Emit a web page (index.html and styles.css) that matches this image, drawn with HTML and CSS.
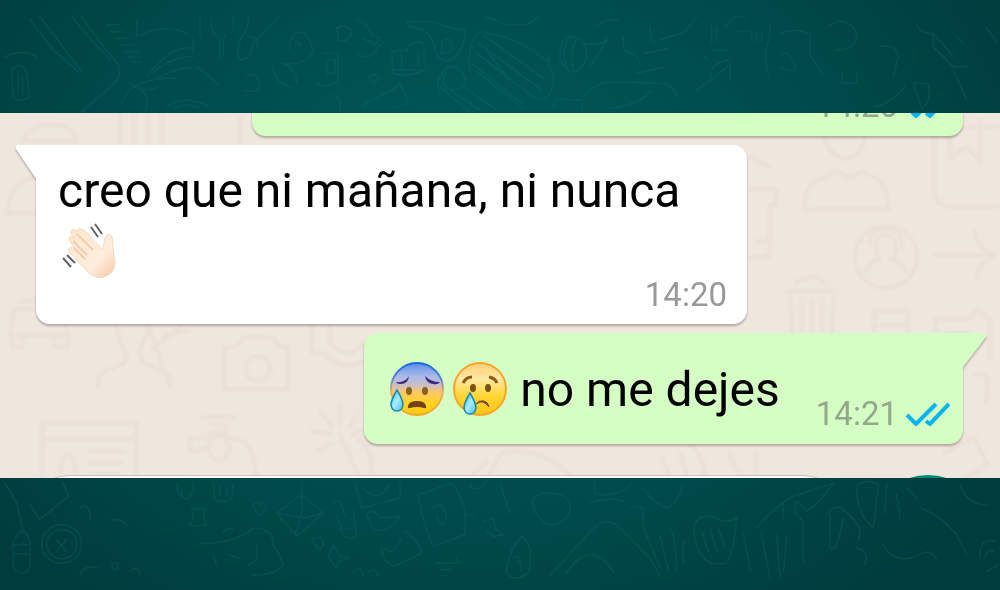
FILE: index.html
```html
<!DOCTYPE html>
<html lang="es">
<head>
<meta charset="utf-8">
<meta name="viewport" content="width=device-width, initial-scale=1">
<title>Chat</title>
<link rel="stylesheet" href="styles.css">
</head>
<body class="page">
<header class="band band-top">
  <svg class="band-doodles" viewBox="0 0 3000 339" preserveAspectRatio="xMidYMid slice" aria-hidden="true">
    <path d="M15 170q50-25 95 0M35 210q25-30 45 5l10 75q-30 20-50 5zM55 220v55M68 230v50M90 60l70 90 75 65M120 50l60 80 65 85M215 50l60 70 55 60M240 45l70 95 45 55q15 40-30 70l-90 80"/>
    <path d="M320 75h35M330 95h35M345 115h40M360 135h40M375 155h40M385 172h35M395 186h30M410 60v50M425 105q70-35 135-5M440 230q80-100 140-85M460 220q50-50 120-50M475 232q60-30 100-30M400 260q60-30 130-25M365 310q30-70 60-40t10 60M385 245q45 40 90 15M580 110v50"/>
    <path d="M600 50v60M635 55q-5 50 25 60v65M675 105q-10 30-5 60M700 50v40M745 50q0 40-20 60-20 50-5 70 35 0 40-50 60-60 75-80M740 110q40-5 30 35M590 200l70 55M740 230q30-20 35 15 10 40-40 25M500 320q50-35 120-5M525 325q40-20 70 0"/>
    <path d="M870 150q-10-40 30-55 30 10 40 60-20 40-80 35M885 120l20 20M820 200q0 50 65 65M850 190q40 20 40 60M970 160h45v80q-30 30-70 10M980 180h25v40h-25zM1010 85q30-20 45 10-5 35-40 25zM1065 60q40 5 50 45l25 10-15 20-35-20M1070 155q25 30 50 5l20-25M1110 235a12 12 0 1024 0 12 12 0 10-24 0"/>
    <path d="M1220 65h80q40 20 95 25 0 60-40 90-40 10-50-30-5-60-75-70zM1325 125q20-20 30 5t-30 30zM1175 160q30-20 45-5 5-30 40-30 20 10 10 40l10 40q-50 30-100 15zM1180 210h95M1205 200v-45M1255 200v-45M1320 285q-20-50 25-85 50 0 50 50-30 30-55 15-20-25 0-50M1090 315q60-35 90-45l20-20 25 60-45 15M1000 285q25 10 20 45"/>
    <path d="M1410 210q-10-90 30-115 130 20 200 90l5-20q10 0 0 30 30 40 5 85-15 25-40 15l-85-60-70-90M1450 105l180 130M1435 130l190 140M1425 155l180 140M1415 190l150 120M1430 215l140 110M1320 260l90 80M1350 270l90 60M1390 260l100 70M1460 50l60 25h60l35-25"/>
    <path d="M1680 180q0-70 30-70 50 0 50 60-20 60-55 40zM1700 205q-20-60 10-95M1720 205q-10-60 10-85M1750 130q50 10 75-15l-55 85M1790 75q35-20 70-15M1870 110q-5 40 20 50 30 10 30 35M1935 160l70-15M1980 120q50-20 70-20l40-50M1950 80q0 40 15 50M1660 325q0-40 35-25h50v40M1750 290q30-40 80-45l150 5q40 0 50 40M1910 220l85-20M1820 325q90-5 130-50"/>
    <path d="M2135 80v50M2150 80v45M2140 150h40M2110 165l15 15M2175 85q25-50 60-30M2205 95h35M2255 95v30M2270 95v30M2285 95v30M2310 70q0 50-10 70t5 85M2340 100q60-20 90 5v60l40 60M2340 170q20-30 40 15t-40 15M2090 270q60-40 100-80v50M2190 180q-60 5-60 60"/>
    <path d="M2490 75q50-30 80 25 0 50-60 50M2525 215v35h45v-35M2640 140q50-10 55 30l-15 60M2750 75q15 30 50 25v40l60 60h45M2800 100l60 70M2740 250h45q10 60-20 75l-15-45zM2625 320q40-5 90-60M2860 210l40 90M2960 85l30 40M2870 110l20 20"/>
  </svg>
</header>

<main class="chat">
  <svg class="wallpaper" viewBox="0 0 1000 365" preserveAspectRatio="xMidYMid slice" aria-hidden="true">
    <path d="M22 28q8-16 30-16t24 16zM120 0v32M134 0v32M148 0v32M162 0v32M240 5v28M8 96q2-26 26-32M6 100h30"/>
    <path d="M14 196h48l6 26H10zM12 222v12h10v-10M68 222v12H54v-10M22 188h34M98 274q-2-14 12-18l14-6q6-8-4-20l-4-22M146 204q6 10-2 24-8 12 0 22l14 6q14 4 12 18zM152 236l28-22M164 222l24-4"/>
    <path d="M224 234h12l8-10h28l8 10h8v42h-64zM258 243a12 12 0 100 25 12 12 0 000-25M312 210v30h12M324 240q20 22 44 6M330 214v16q18 20 34 0"/>
    <path d="M42 370v-60h94v60M42 326h94M90 338h32M90 350h32M90 362h32M60 370q0-28 8-28t8 28M202 304h34M212 312h14v10M188 325h18q4-6 12-6t12 6q26 0 26 42M190 325v14l16-4M210 330a10 12 0 1018 0 10 12 0 00-18 0"/>
    <path d="M340 290v22M320 298l12 16M360 296l-10 18M312 318l18 4M366 314l-14 8M318 338l14-8M340 322l18 40M358 326q18 12 12 38"/>
    <path d="M824 8q-2 34 22 38 22-4 20-38M836 22h18M804 96q0-26 20-32l14-6q12 12 24 0l12 6q14 6 14 32zM934 0v78q2 16 18 16h60M950 8v38l16-12 14 14V8M938 14h64"/>
    <path d="M886 113a31 31 0 100 62 31 31 0 000-62M866 158q4-10 14-12-4-4-4-12 0-12 10-12t10 12q0 8-4 12 10 2 14 12M870 132q-2-14 16-16 18 2 16 18M934 142h62M974 118q4 20 22 24-16 6-20 24M750 44l20 10M750 76h26v16h-6v52h-20M756 128h10"/>
    <path d="M786 178h50M796 170q14-12 30 0M790 184l4 60M802 186v60M812 186v60M822 186v60M834 184l-4 60M874 198h34v60M874 198v60M874 212h34M936 206h34l8-10 12 10v40M936 206v60M948 220h22"/>
    <path d="M484 370l18-30q40-8 70 24M662 344l8 20M680 340l6 20M690 330q20 20 12 40M730 340q6 26 24 30M756 338v30M944 340l30-16 14 28-30 18M974 262q18-8 12 28M486 350q-20 14-22 30"/>
  </svg>

  <section class="messages" aria-label="Mensajes">
    <article class="bubble bubble-out bubble-first">
      <div class="meta">
        <time>14:20</time>
        <svg class="ticks" viewBox="0 0 44 24" role="img" aria-label="Leído"><path d="M1 13l9 9L30 2M20 19l4 3L43 2"/></svg>
      </div>
    </article>

    <article class="bubble bubble-in">
      <svg class="tail tail-in" viewBox="0 0 22 35" aria-hidden="true"><path d="M22 0H3Q0 0 1 4L22 35z"/></svg>
      <p class="text">creo que ni mañana, ni nunca
        <svg class="emoji emoji-wave" viewBox="0 0 56 56" role="img" aria-label="Mano saludando">
          <defs><linearGradient id="skin" x1="0" y1="0" x2="1" y2="1"><stop offset="0" stop-color="#fbe5ce"/><stop offset=".65" stop-color="#ffeddb"/><stop offset="1" stop-color="#f5c5a8"/></linearGradient></defs>
          <path fill="url(#skin)" stroke="#f5d9bf" d="M10 21c-3-3-4-6-2-7 1-1 3 0 5 2-4-4-5-7-3-9 2-1 4 0 6 2-1-3 1-4 3-3 2 0 4 2 6 4 7 7 12 13 15 16 3-3 1-9 4-13 1-3 5-2 6 1 1 7 1 13 2 19 3 10-1 17-8 20-8 4-14 0-20-6L9 31c-3-3-3-5-1-6 2-2 4 0 5 1z"/>
          <path class="wave-crease" d="M11 18l14 14M15 11l16 16M12 25l11 11"/>
          <path class="wave-motion" d="M29 4l7 10M33 1l7 10M1 35l8 9M5 32l8 8"/>
        </svg>
      </p>
      <div class="meta meta-in"><time>14:20</time></div>
    </article>

    <article class="bubble bubble-out">
      <svg class="tail tail-out" viewBox="0 0 25 37" aria-hidden="true"><path d="M0 0h21q4 0 3 4L1 34v3H0z"/></svg>
      <p class="text">
        <svg class="emoji emoji-gap" viewBox="0 0 56 56" role="img" aria-label="Cara con sudor frío">
          <defs>
            <linearGradient id="cold" x1="0" y1="0" x2="0" y2="1"><stop offset="0" stop-color="#5b8ee8"/><stop offset=".25" stop-color="#a8b9ea"/><stop offset=".42" stop-color="#c9bdc9"/><stop offset=".58" stop-color="#ffc95e"/><stop offset=".8" stop-color="#ffd51c"/><stop offset="1" stop-color="#ffc815"/></linearGradient>
            <linearGradient id="coldrim" x1="0" y1="0" x2="0" y2="1"><stop offset="0" stop-color="#1268e0"/><stop offset=".3" stop-color="#5786d6"/><stop offset=".55" stop-color="#f2a95c"/><stop offset="1" stop-color="#f5a51f"/></linearGradient>
            <linearGradient id="drop" x1="0" y1="0" x2="1" y2="1"><stop offset="0" stop-color="#35b5dc"/><stop offset=".5" stop-color="#a9ecff"/><stop offset="1" stop-color="#45bfe5"/></linearGradient>
          </defs>
          <circle cx="28" cy="28" r="26" fill="url(#cold)" stroke="url(#coldrim)" stroke-width="2"/>
          <path fill="#3c2c7c" d="M7 21q9 1 13-6-1 8-8 8-4 0-5-2zM36 15q6 6 15 6-2 3-7 2-7-1-8-8z"/>
          <ellipse cx="20" cy="30" rx="3" ry="4" fill="#87601c"/><ellipse cx="36" cy="30" rx="3" ry="4" fill="#87601c"/>
          <path fill="#754316" d="M19 45q-1 3 2 2 7-2 14 0 3 1 2-2-1-5-9-5t-9 5z"/>
          <path fill="url(#drop)" stroke="#118ab8" stroke-width="1.5" d="M8 29q-6 10-6 15 1 6 6 6t6-6q0-5-6-15z"/>
        </svg><svg class="emoji" viewBox="0 0 56 56" role="img" aria-label="Cara llorando">
          <defs><linearGradient id="sad" x1="0" y1="0" x2="0" y2="1"><stop offset="0" stop-color="#ffce70"/><stop offset=".3" stop-color="#ffe9a5"/><stop offset=".65" stop-color="#ffd52f"/><stop offset="1" stop-color="#ffc414"/></linearGradient></defs>
          <circle cx="28" cy="28" r="26" fill="url(#sad)" stroke="#f9a52a" stroke-width="2"/>
          <path class="brow" d="M11 22q3-6 9-6M37 16q6 1 8 6"/>
          <ellipse cx="21" cy="27" rx="3" ry="4" fill="#795017"/><ellipse cx="36" cy="27" rx="3" ry="4" fill="#795017"/>
          <path fill="#774416" d="M24 43q4-3 7-2 3 1 6 5-1-5-5-6-5-1-8 3z" stroke="#774416"/>
          <path fill="url(#drop)" stroke="#118ab8" stroke-width="1.5" d="M18 32q-6 10-6 15 1 6 6 6t6-6q0-5-6-15z"/>
        </svg> no me dejes</p>
      <div class="meta">
        <time>14:21</time>
        <svg class="ticks" viewBox="0 0 44 24" role="img" aria-label="Leído"><path d="M1 13l9 9L30 2M20 19l4 3L43 2"/></svg>
      </div>
    </article>
  </section>

  <form class="composer">
    <input class="composer-input" type="text" aria-label="Mensaje">
    <button class="composer-send" type="button" aria-label="Mensaje de voz"></button>
  </form>
</main>

<footer class="band band-bottom">
  <svg class="band-doodles" viewBox="0 0 3000 336" preserveAspectRatio="xMidYMid slice" aria-hidden="true">
    <path d="M15 15l35 60 20 90M90 80l30 45 85-70q-10-30-20-45M60 160h15l15 30v80q-25 30-50 0v-80zM40 200h50M40 228h50M185 140a60 58 0 100 116 60 58 0 000-116M185 155a45 44 0 100 88 45 44 0 000-88M170 185l30 35M200 185l-30 35M240 90q30-20 30 35M335 125q30-5 45 20M240 290q10-30 55-20M335 260q20-15 20 10-15 20-20-10M390 280q25-20 30 10"/>
    <path d="M530 15q0 35 30 50 25-20 20-50M545 30v25M640 15l5 50q20 10 50 0l5-50M660 25v30M680 25v30M575 90l20 5 20-5-5 25 10 25-30 5-20-5 10-20zM760 80q15-15 20 0 10-10 18 5-5 20-20 28-15-10-18-33M600 195q100 5 160-45 60 0 60 50 20 30 30 60-30 35-90 30M670 165q10-20 30-10M690 230l25 10M640 230l10 35M770 200v45l-25 15"/>
    <path d="M830 105l75-55 65 55-80 70zM905 15v90l-20 65M830 105l80 15 60-15M1000 80q15-25 25 0l10 35M1010 110l20 65q25 10 40 0l-10-80M1020 155l40-5M1065 15l20 75 115-30V15M1090 30q50 50 80-15M1100 110q20-25 40 10l60-5q-30 50-80 40zM935 185q35-20 35 15-10 30-35-15M985 235l15-35 20 35 30 5-35 10-5 20-15-20zM1145 210q0 40 40 55l80-40q-10-40-50-65M1155 210q20 30 50-30M1060 285q20-30 30 10M1105 285q20-25 30 10"/>
    <path d="M1255 50l100-35q30 40 40 80v75l-95 35q-30-60-45-155zM1300 90q30-25 40 30-15 40-30-5M1410 20q20 30 50-10M1390 110h30M1450 130l30-10 5 30 25 20-30 5-20-15M1310 255h70M1320 275h30M1370 240v15M1500 15q20 60 30 90M1600 60q40-30 90-5 35 15 10 65-50 40-80 0-25-20-20-60M1520 285q0-60 45-110 40 30 20 110-40 30-65 0M1540 240q20-20 25 40"/>
    <path d="M1770 75q60-20 100-5M1785 15v30q60 20 110-30M1930 30q30 50 75 60 45-40 40-70M1650 290q60-60 130-140 40-40 80 0l80 80q25 30 40 65M1695 290q50-70 85-60 40 10 60 55M1890 95q25-20 40 0v50l50 125M1980 175l25 100M2010 150q20 35 20 130M2050 190v70M2080 150q10-40 60-35 50 30 70 0-5 100-30 140-90 20-100-105zM2105 160l20 60M2130 150l20 70M2155 155l20 50M2230 165l20 110M2285 170l25 130M2330 170l10 130M2360 175l-10 110"/>
    <path d="M2270 150q60-70 110-95l120-40q-40 60-80 85-20-25-30-30-20 30 20 60v120M2350 75v50M2570 30q0 80 50 120l15-130q-30-20-60 0M2660 15l-5 90M2690 50l10 70M2480 110q30-40 55-10 60 50 40 80M2490 110v100q20 20 40-90M2720 30l30 30M2760 90q60 20 110 80l30 60M2650 200q30 60 100 35 40-30 60 10M2570 210q40 10 25 50M2880 20q20 60 80 60M2940 240q-5-60 45-50M2955 240q5-30 25-20M2960 280l35-20"/>
  </svg>
</footer>
</body>
</html>
```

FILE: styles.css
```css
* {
  box-sizing: border-box;
}

.page {
  display: flex;
  flex-direction: column;
  height: 100vh;
  margin: 0;
  background: radial-gradient(ellipse 62% 82% at 47% 38%, #005a5b 0%, #004a4b 60%, #003c3e 100%);
  font-family: Roboto, "Liberation Sans", sans-serif;
}

.band {
  position: relative;
  overflow: hidden;
}

.band-top {
  flex: 113 1 0;
}

.band-bottom {
  flex: 112 1 0;
}

.band-doodles {
  position: absolute;
  inset: 0;
  width: 100%;
  height: 100%;
  fill: none;
  stroke: #18777a;
  stroke-width: 5;
  stroke-linecap: round;
  stroke-linejoin: round;
  opacity: 0.22;
}

.chat {
  position: relative;
  flex: 365 1 0;
  min-height: 0;
  overflow: hidden;
  background: #efe7de;
}

.wallpaper {
  position: absolute;
  inset: 0;
  width: 100%;
  height: 100%;
  fill: none;
  stroke: #e8ddd4;
  stroke-width: 5;
  stroke-linecap: round;
  stroke-linejoin: round;
  filter: blur(1px);
  opacity: 0.6;
}

.messages {
  position: relative;
  display: flex;
  flex-direction: column;
  gap: 9px;
  padding: 0 37px 0 36px;
}

.bubble {
  position: relative;
  border-radius: 14px;
  filter: drop-shadow(0 2px 1px rgba(90, 70, 60, 0.4));
}

.bubble-in {
  width: 711px;
  max-width: 100%;
  padding: 16px 20px 9px 22px;
  border-top-left-radius: 0;
  background: #fff;
}

.bubble-out {
  display: flex;
  align-items: flex-end;
  justify-content: flex-end;
  align-self: flex-end;
  gap: 36px;
  min-height: 111px;
  padding: 27px 13px 10px 25px;
  border-top-right-radius: 0;
  background: #d5fec4;
}

.bubble-first {
  width: 711px;
  max-width: 100%;
  margin-top: -88px;
}

.tail {
  position: absolute;
  top: 0;
}

.tail-in {
  right: 100%;
  width: 22px;
  height: 35px;
  margin-right: -1px;
  fill: #fff;
}

.tail-out {
  left: 100%;
  width: 25px;
  height: 37px;
  margin-left: -1px;
  fill: #d5fec4;
}

.text {
  margin: 0;
  color: #000;
  font-size: 48px;
  line-height: 60px;
}

.bubble-out .text {
  margin-bottom: 14px;
  white-space: nowrap;
}

.emoji {
  width: 56px;
  height: 56px;
  vertical-align: -11px;
}

.emoji-gap {
  margin-right: 7px;
}

.emoji-wave {
  display: block;
  margin: 2px 0 2px 4px;
}

.wave-crease {
  fill: none;
  stroke: #efceb2;
  stroke-width: 2;
}

.wave-motion {
  fill: none;
  stroke: #606468;
  stroke-width: 2;
}

.brow {
  fill: none;
  stroke: #8d591b;
  stroke-width: 3;
}

.meta {
  display: flex;
  align-items: center;
  gap: 8px;
  color: #999;
  font-size: 33px;
  line-height: 40px;
}

.bubble-out .meta {
  color: #92a78b;
}

.meta-in {
  justify-content: flex-end;
  margin-top: -6px;
}

.ticks {
  width: 44px;
  height: 24px;
  fill: none;
  stroke: #09b5ee;
  stroke-width: 4;
}

.composer {
  position: relative;
  display: flex;
  align-items: flex-start;
  gap: 18px;
  margin-top: 31px;
  padding: 0 14px 0 20px;
}

.composer-input {
  flex: 1;
  min-width: 0;
  height: 100px;
  padding: 0 40px;
  border: 1px solid #cdbdb2;
  border-radius: 50px;
  background: #fff;
  font: inherit;
}

.composer-send {
  width: 116px;
  height: 116px;
  border: 0;
  border-radius: 50%;
  background: #008a70;
}
```
